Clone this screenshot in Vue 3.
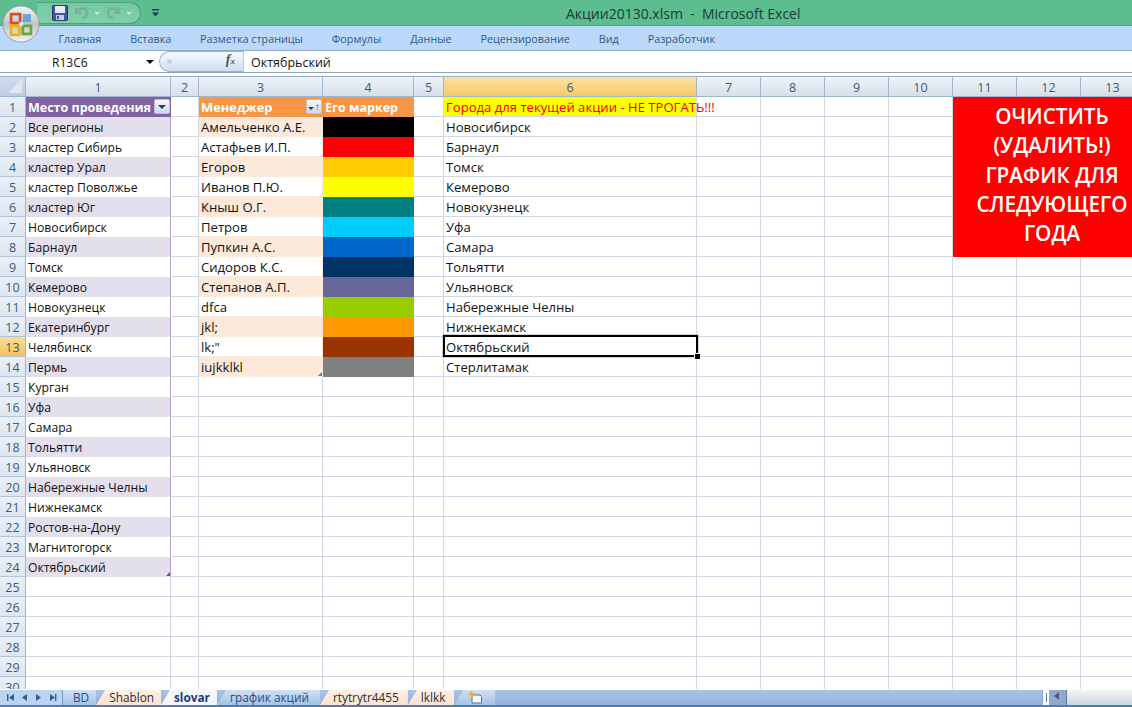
<script setup>
const colWidths = [145, 28, 124, 91, 30, 253, 64, 64, 64, 64, 64, 64, 64]
const gridCols = ['26px', ...colWidths.map((w) => w + 'px')].join(' ')
const ribbon = ['Главная', 'Вставка', 'Разметка страницы', 'Формулы', 'Данные', 'Рецензирование', 'Вид', 'Разработчик']
const places = ['Все регионы', 'кластер Сибирь', 'кластер Урал', 'кластер Поволжье', 'кластер Юг', 'Новосибирск', 'Барнаул', 'Томск', 'Кемерово', 'Новокузнецк', 'Екатеринбург', 'Челябинск', 'Пермь', 'Курган', 'Уфа', 'Самара', 'Тольятти', 'Ульяновск', 'Набережные Челны', 'Нижнекамск', 'Ростов-на-Дону', 'Магнитогорск', 'Октябрьский']
const managers = ['Амельченко А.Е.', 'Астафьев И.П.', 'Егоров', 'Иванов П.Ю.', 'Кныш О.Г.', 'Петров', 'Пупкин А.С.', 'Сидоров К.С.', 'Степанов А.П.', 'dfca', 'jkl;', 'lk;"', 'iujkklkl']
const markers = ['#000000', '#ff0000', '#ffcc00', '#ffff00', '#008080', '#00ccff', '#0066cc', '#003366', '#666699', '#99cc00', '#ff9900', '#993300', '#808080']
const cities = ['Новосибирск', 'Барнаул', 'Томск', 'Кемерово', 'Новокузнецк', 'Уфа', 'Самара', 'Тольятти', 'Ульяновск', 'Набережные Челны', 'Нижнекамск', 'Октябрьский', 'Стерлитамак']
const rows = Array.from({ length: 30 }, (_, i) => i + 1)
const cols = colWidths.map((_, i) => i + 1)
const tabs = [
  { name: 'BD', cls: 'blue first' },
  { name: 'Shablon', cls: 'peach' },
  { name: 'slovar', cls: 'active' },
  { name: 'график акций', cls: 'blue wide' },
  { name: 'rtytrytr4455', cls: 'peach mid' },
  { name: 'lklkk', cls: 'peach mid' }
]

function isCovered(r, c) {
  return c >= 11 && r <= 8
}
function text(r, c) {
  if (c === 1) return r === 1 ? 'Место проведения' : places[r - 2] || ''
  if (c === 3) return r === 1 ? 'Менеджер' : managers[r - 2] || ''
  if (c === 4 && r === 1) return 'Его маркер'
  if (c === 6) return r === 1 ? 'Города для текущей акции - НЕ ТРОГАТЬ!!!' : cities[r - 2] || ''
  return ''
}
function cellClass(r, c) {
  const list = ['col' + c]
  if (c === 1 && r <= 24) list.push(r === 1 ? 'head-purple' : r % 2 === 0 ? 'band-purple' : 'edge-purple')
  if (c === 3 && r <= 14) list.push(r === 1 ? 'head-orange' : r % 2 === 0 ? 'band-orange' : 'plain-orange')
  if (c === 4 && r === 1) list.push('head-orange', 'head-marker')
  if (c === 4 && r > 1 && r <= 14) list.push('swatch')
  if (c === 6 && r === 1) list.push('warn')
  return list
}
function cellBg(r, c) {
  return c === 4 && r > 1 && r <= 14 ? { background: markers[r - 2] } : null
}
</script>

<template>
  <div class="excel">
    <header class="titlebar">
      <div class="qat">
        <svg class="save" width="16" height="16" viewBox="0 0 16 16">
          <rect x="0.5" y="0.5" width="15" height="15" rx="1" fill="#3f57a8" stroke="#26386f" />
          <rect x="3" y="1" width="10" height="7" fill="#e6edf7" />
          <rect x="4" y="10" width="8" height="5" fill="#c3cde0" />
          <rect x="5" y="11" width="2" height="3" fill="#3f57a8" />
        </svg>
        <svg width="26" height="16" viewBox="0 0 26 16" fill="none" stroke="#7ea9a4" stroke-width="2">
          <path d="M2 3 v5 h5 M2 8 C5 2 13 2 13 8 C13 11 11 13 8 13" />
          <path d="M21 7 l2 2 l2 -2" stroke="#e2f1ea" stroke-width="1.2" />
        </svg>
        <svg width="26" height="16" viewBox="0 0 26 16" fill="none" stroke="#7ea9a4" stroke-width="2">
          <path d="M13 3 v5 h-5 M13 8 C10 2 2 2 2 8 C2 11 4 13 7 13" />
          <path d="M21 7 l2 2 l2 -2" stroke="#e2f1ea" stroke-width="1.2" />
        </svg>
      </div>
      <svg class="customize" width="7" height="8" viewBox="0 0 7 8">
        <rect x="0" y="0" width="7" height="1.4" fill="#1f3a4a" />
        <path d="M0 3.5 h7 l-3.5 4 z" fill="#1f3a4a" />
      </svg>
      <div class="title">Акции20130.xlsm&nbsp; - &nbsp;Microsoft Excel</div>
    </header>

    <svg class="orb" width="38" height="38" viewBox="0 0 42 42">
      <defs>
        <linearGradient id="orbFill" x1="0" y1="0" x2="0" y2="1">
          <stop offset="0" stop-color="#f4f6f8" />
          <stop offset="0.5" stop-color="#bfc6cc" />
          <stop offset="1" stop-color="#f2f4f6" />
        </linearGradient>
      </defs>
      <circle cx="21" cy="21" r="20" fill="url(#orbFill)" stroke="#8b9aa3" />
      <path d="M10 10 h10 v10 h-10 z" fill="none" stroke="#d9501e" stroke-width="3" />
      <path d="M23 10 h9 v9 h-9 z" fill="#5b9ad8" opacity="0.85" />
      <path d="M10 23 h9 v10 h-9 z" fill="none" stroke="#eeb111" stroke-width="3" />
      <path d="M23 23 h9 v9 h-9 z" fill="none" stroke="#6aa83b" stroke-width="3" />
      <circle cx="21" cy="21" r="2.5" fill="#ffffff" opacity="0.8" />
    </svg>

    <nav class="ribbon">
      <span v-for="item in ribbon" :key="item">{{ item }}</span>
    </nav>

    <section class="formula">
      <div class="namebox">
        <span>R13C6</span>
        <i class="drop"></i>
      </div>
      <div class="pill">
        <i class="dot"></i>
        <em class="fx">f<small>x</small></em>
      </div>
      <div class="input">Октябрьский</div>
    </section>

    <main class="sheet" :style="{ gridTemplateColumns: gridCols }">
      <div class="corner"><i></i></div>
      <div v-for="c in cols" :key="'h' + c" class="colhead" :class="{ hot: c === 6 }">{{ c }}</div>
      <template v-for="r in rows" :key="'r' + r">
        <div class="rowhead" :class="{ hot: r === 13 }">{{ r }}</div>
        <template v-for="c in cols" :key="r + '-' + c">
          <div v-if="!isCovered(r, c)" class="cell" :class="cellClass(r, c)" :style="cellBg(r, c)">
            <span class="txt">{{ text(r, c) }}</span>
            <i v-if="r === 1 && c === 1" class="filter"><b></b></i>
            <i v-if="r === 1 && c === 3" class="filter sorted"><b></b><u>↑</u></i>
            <i v-if="(r === 24 && c === 1) || (r === 14 && c === 3)" class="corner-mark" :class="c === 1 ? 'mk-p' : 'mk-o'"></i>
            <i v-if="r === 13 && c === 6" class="sel"><i class="handle"></i></i>
          </div>
        </template>
      </template>
      <div class="clear">
        <span>ОЧИСТИТЬ (УДАЛИТЬ!) ГРАФИК ДЛЯ СЛЕДУЮЩЕГО ГОДА</span>
      </div>
    </main>

    <footer class="tabsbar">
      <div class="navs">
        <svg width="60" height="17" viewBox="0 0 60 17" fill="#2f5f9a">
          <path d="M7 5 h1.4 v7 h-1.4 z M14 5 l-5 3.5 l5 3.5 z" />
          <path d="M27 5 l-5 3.5 l5 3.5 z" />
          <path d="M36 5 l5 3.5 l-5 3.5 z" />
          <path d="M50 5 l5 3.5 l-5 3.5 z M55 5 h1.4 v7 h-1.4 z" />
        </svg>
      </div>
      <div v-for="t in tabs" :key="t.name" class="tab" :class="t.cls">{{ t.name }}</div>
      <div class="tab blue newtab">
        <svg width="16" height="15" viewBox="0 0 16 15">
          <path d="M5 5 h8 l1.5 1.5 v6.5 h-9.5 z" fill="#f6f8fb" stroke="#56708f" />
          <path d="M4.5 0 l1.2 2.8 l2.8 1.2 l-2.8 1.2 l-1.2 2.8 l-1.2 -2.8 l-2.8 -1.2 l2.8 -1.2 z" fill="#f2b01e" />
        </svg>
      </div>
      <div class="spacer"></div>
      <div class="split"><i></i></div>
      <div class="arrow"><i></i></div>
      <div class="track"></div>
    </footer>
  </div>
</template>

<style>
html, body { margin: 0; overflow: hidden; background: #fff; }
</style>

<style scoped>
.excel {
  position: relative;
  width: 1132px;
  height: 707px;
  display: flex;
  flex-direction: column;
  overflow: hidden;
  font-family: "Open Sans", "Noto Sans", sans-serif;
  font-size: 12.5px;
  color: #111;
}
.titlebar {
  height: 25px;
  flex: none;
  display: flex;
  align-items: center;
  background: #5cbd8e;
  border-bottom: 1px solid #55a581;
  position: relative;
}
.qat {
  margin-left: 37px;
  width: 104px;
  height: 22px;
  box-sizing: border-box;
  border: 1px solid #4f9f7b;
  border-left: none;
  border-radius: 0 12px 12px 0;
  background: linear-gradient(#74c9a0, #80cfa9);
  display: flex;
  align-items: center;
  gap: 6px;
  padding-left: 15px;
}
.customize { margin-left: 11px; }
.title {
  position: absolute;
  left: 566px;
  top: 4px;
  font-size: 14px;
  color: #1c3b36;
  white-space: nowrap;
}
.orb { position: absolute; left: 2px; top: 5px; z-index: 3; }
.ribbon {
  height: 24px;
  flex: none;
  display: flex;
  align-items: center;
  gap: 28.9px;
  padding-left: 58.5px;
  background: #bcd9fb;
  border-bottom: 1px solid #8fa9c5;
  font-size: 10.8px;
  color: #2f5a86;
}
.formula {
  height: 21px;
  flex: none;
  display: flex;
  background: #fff;
  border-bottom: 1px solid #8ca3bc;
  margin-bottom: 3px;
}
.namebox {
  width: 155px;
  flex: none;
  position: relative;
  display: flex;
  align-items: center;
  padding-left: 52px;
  box-sizing: border-box;
  font-size: 12px;
  padding-top: 1px;
}
.drop {
  position: absolute;
  right: 1px;
  top: 9px;
  border: 4px solid transparent;
  border-top: 4px solid #111;
  border-bottom: none;
}
.pill {
  width: 84px;
  margin-left: 4px;
  flex: none;
  position: relative;
  border: 1px solid #9db2ca;
  border-right: none;
  border-radius: 11px 0 0 11px;
  box-sizing: border-box;
  background: linear-gradient(#f4f8fd, #cfdff2);
}
.dot {
  position: absolute;
  left: 7px;
  top: 7px;
  width: 5px;
  height: 5px;
  border-radius: 50%;
  background: #c4d0dd;
}
.fx {
  position: absolute;
  right: 8px;
  top: 0;
  font-family: "Liberation Serif", serif;
  font-size: 14px;
  color: #555;
  font-weight: bold;
}
.fx small { font-size: 9px; }
.input {
  flex: 1;
  padding-left: 7px;
  border-left: 1px solid #b9c7d8;
  line-height: 23px;
  font-size: 12.5px;
}
.sheet {
  flex: none;
  height: 613px;
  display: grid;
  grid-auto-rows: 20px;
  overflow: hidden;
  border-top: 1px solid #9aaec5;
  box-sizing: border-box;
  background: #fff;
}
.corner {
  background: linear-gradient(#cfdcec, #bccde2);
  border-right: 1px solid #9eb6ce;
  border-bottom: 1px solid #9eb6ce;
  position: relative;
}
.corner i {
  position: absolute;
  right: 3px;
  bottom: 3px;
  border-left: 14px solid transparent;
  border-bottom: 14px solid #dfe7f1;
}
.colhead, .rowhead {
  display: flex;
  align-items: center;
  justify-content: center;
  color: #3e5a7e;
  font-size: 12.5px;
  box-sizing: border-box;
  padding-top: 1px;
  border-right: 1px solid #9eb6ce;
  border-bottom: 1px solid #9eb6ce;
  background: linear-gradient(#f0f3f8, #d6dfea);
}
.rowhead { background: linear-gradient(#eaf0f7, #dde6f1); border-bottom-color: #b4c4d8; }
.colhead.hot { background: linear-gradient(#f9e3a6, #f6c964); }
.rowhead.hot { background: linear-gradient(#f9dd97, #f6c15a); }
.cell {
  position: relative;
  box-sizing: border-box;
  border-right: 1px solid #d0d7e5;
  border-bottom: 1px solid #d0d7e5;
  padding-left: 2px;
  line-height: 21px;
  font-size: 13.1px;
  white-space: nowrap;
  min-width: 0;
}
.col1 { font-size: 12.2px; }
.txt { position: relative; z-index: 1; }
.head-purple { background: #8064a2; color: #fff; font-weight: 700; border-color: #8064a2; font-size: 12.5px; }
.band-purple { background: #e4dfec; border-color: #b1a0c7; border-bottom-color: #e4dfec; }
.edge-purple { border-right-color: #b1a0c7; border-bottom-color: #fff; }
.head-orange { background: #f79646; color: #fff; font-weight: 700; border-color: #f79646; font-size: 12.9px; }
.head-marker { font-size: 12.5px; }
.band-orange { background: #fde9d9; border-color: #fde9d9; }
.plain-orange { border-bottom-color: #fde9d9; border-right-color: #fde9d9; }
.swatch { border-color: transparent; }
.warn { background: #ffff00; color: #f00000; }
.sel {
  position: absolute;
  left: -1px;
  right: -2px;
  top: -2px;
  bottom: -1px;
  border: 2px solid #000;
  box-shadow: 0 0 1px #000;
  z-index: 2;
}
.handle {
  position: absolute;
  right: -4px;
  bottom: -4px;
  width: 5px;
  height: 5px;
  background: #000;
  border: 1px solid #fff;
  border-width: 1px 0 0 1px;
}
.filter {
  position: absolute;
  right: 0;
  top: 2px;
  width: 16px;
  height: 15px;
  box-sizing: border-box;
  border-radius: 2px;
  border: 1px solid #b9c4d4;
  background: linear-gradient(#f6f8fb, #cfd8e6);
}
.filter b {
  position: absolute;
  left: 3px;
  top: 5px;
  border: 4px solid transparent;
  border-top: 4px solid #2a3d5e;
  border-bottom: none;
}
.sorted b { left: 1px; top: 7px; border-width: 3px 3px 0; }
.sorted u {
  position: absolute;
  right: 1px;
  top: -2px;
  font-size: 10px;
  line-height: 16px;
  text-decoration: none;
  color: #2a3d5e;
}
.corner-mark {
  position: absolute;
  right: 0;
  bottom: 0;
  border-left: 4px solid transparent;
  border-bottom: 4px solid;
}
.mk-p { color: #6a4f94; }
.mk-o { color: #5b7fa8; }
.clear {
  grid-column: 12 / 15;
  grid-row: 2 / 10;
  background: #ff0000;
  color: #fff;
  font-size: 20.7px;
  font-weight: 600;
  line-height: 29.3px;
  text-align: center;
  padding: 5px 0 0 0;
  box-sizing: border-box;
  width: 199px;
  height: 160px;
  display: flex;
  justify-content: center;
}
.clear span { display: block; width: 160px; margin-left: -1px; }
.tabsbar {
  position: absolute;
  left: 0;
  right: 0;
  bottom: 0;
  height: 17px;
  display: flex;
  align-items: stretch;
  background: linear-gradient(#a9c3e6, #93b2da);
  border-bottom: 2px solid #4f7cb0;
  box-sizing: border-box;
  font-size: 11.8px;
  z-index: 4;
}
.navs { width: 62px; flex: none; background: #bcd4f0; border-right: 1px solid #7f9cc2; }
.navs svg { display: block; margin-top: -1px; }
.tab {
  display: flex;
  align-items: center;
  padding: 0 7px 0 13px;
  line-height: 15px;
  clip-path: polygon(9px 0, 100% 0, 100% 100%, 0 100%);
  white-space: nowrap;
}
.first { clip-path: none; padding: 0 7px 0 10px; }
.wide { padding-right: 11px; }
.mid { padding-right: 9px; }
.blue { background: linear-gradient(#cfe0f4, #a7c2e6); color: #1f4d8c; }
.peach { background: linear-gradient(#fdf0e3, #fde3cc); color: #1c2e46; }
.active { background: #f4f8fd; color: #16407a; font-weight: 700; }
.newtab { padding: 0 12px 0 13px; }
.spacer { flex: 1; }
.split { width: 7px; background: #fff; display: flex; justify-content: center; border-left: 1px solid #8aa6cb; box-sizing: border-box; }
.split i { width: 1px; height: 9px; margin-top: 3px; background: #5c7ba3; }
.arrow { width: 17px; background: #8fa8cc; position: relative; }
.arrow i {
  position: absolute;
  left: 5px;
  top: 2px;
  border: 4px solid transparent;
  border-right: 5px solid #4d5f74;
  border-left: none;
}
.track { width: 65px; background: linear-gradient(#f4f6f9, #ccd4de); border-left: 1px solid #5d7aa0; }
</style>
